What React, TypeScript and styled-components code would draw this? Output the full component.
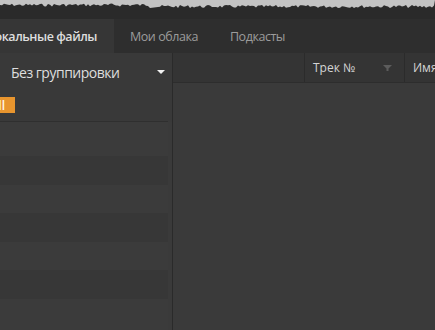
// ========== Media Library
import React from 'react';
import styled, { createGlobalStyle } from 'styled-components';

const Colors = {
  paper: '#c3c3c3',
  top: '#2a2a2a',
  tabBar: '#2e2e2e',
  activeTab: '#363636',
  panel: '#393939',
  stripeLight: '#3b3b3b',
  stripeDark: '#373737',
  header: '#343434',
  line: '#2a2a2a',
  accent: '#e8952e',
  text: '#dedede',
  muted: '#9c9c9c',
};

const GlobalStyle = createGlobalStyle`
  html, body {
    margin: 0;
    padding: 0;
    background: ${Colors.top};
  }
  body {
    font-family: "Open Sans", "Noto Sans", sans-serif;
  }
`;

const tornPoints = (() => {
  const pts: string[] = ['0,0'];
  let seed = 7;
  const rnd = () => {
    seed = (seed * 9301 + 49297) % 233280;
    return seed / 233280;
  };
  for (let x = 0; x <= 435; x += 2) {
    const base = x < 150 ? 3.5 : 5;
    pts.push(`${x},${(base + rnd() * 3).toFixed(1)}`);
  }
  pts.push('435,0');
  return pts.join(' ');
})();

const tabs = ['Мои облака', 'Подкасты'];
const rowHeights = [28, 29, 28, 29, 28, 29, 28];

export default function App() {
  return (
    <>
      <GlobalStyle />
      <Frame>
        <TopBand>
          <svg width="435" height="10" viewBox="0 0 435 10">
            <polygon points={tornPoints} fill={Colors.paper} />
          </svg>
        </TopBand>
        <TabBar>
          <Tab active>
            <TabLabel active>Локальные файлы</TabLabel>
          </Tab>
          {tabs.map((t) => (
            <Tab key={t}>
              <TabLabel>{t}</TabLabel>
            </Tab>
          ))}
        </TabBar>
        <Body>
          <LeftPanel>
            <GroupSelect>
              <span>Без группировки</span>
              <Caret />
            </GroupSelect>
            <FilterBar>
              <AllButton>
                <span>All</span>
              </AllButton>
            </FilterBar>
            <ListArea>
              <List>
                {rowHeights.map((h, i) => (
                  <Row key={i} h={h} dark={i % 2 === 1} />
                ))}
              </List>
              <ScrollTrack />
            </ListArea>
          </LeftPanel>
          <RightPanel>
            <Header>
              <HeaderCell w={132} />
              <HeaderCell w={100}>
                <span>Трек №</span>
                <FilterIcon width="9" height="6" viewBox="0 0 9 6">
                  <path d="M0 0 H9 L5.5 3.5 V6 H3.5 V3.5 Z" fill="#5c5c5c" />
                </FilterIcon>
              </HeaderCell>
              <HeaderCell>
                <span>Имя</span>
              </HeaderCell>
            </Header>
            <Tracks />
          </RightPanel>
        </Body>
      </Frame>
    </>
  );
}

const Frame = styled.div`
  width: 435px;
  height: 330px;
  display: flex;
  flex-direction: column;
  overflow: hidden;
`;

const TopBand = styled.div`
  height: 19px;
  flex-shrink: 0;
  background: ${Colors.top};
  & > svg {
    display: block;
  }
`;

const TabBar = styled.div`
  height: 34px;
  flex-shrink: 0;
  display: flex;
  background: ${Colors.tabBar};
`;

const Tab = styled.div<{ active?: boolean }>`
  display: flex;
  align-items: center;
  justify-content: ${({ active }) => (active ? 'flex-end' : 'flex-start')};
  width: ${({ active }) => (active ? '114px' : 'auto')};
  padding: ${({ active }) => (active ? '0 17px 0 0' : '0 16px')};
  box-sizing: border-box;
  overflow: hidden;
  background: ${({ active }) => (active ? Colors.activeTab : 'transparent')};
`;

const TabLabel = styled.span<{ active?: boolean }>`
  white-space: nowrap;
  font-size: 12.5px;
  letter-spacing: -0.45px;
  font-weight: ${({ active }) => (active ? 600 : 400)};
  color: ${({ active }) => (active ? Colors.text : Colors.muted)};
`;

const Body = styled.div`
  flex: 1;
  display: flex;
  min-height: 0;
`;

const LeftPanel = styled.div`
  width: 172px;
  flex-shrink: 0;
  display: flex;
  flex-direction: column;
  background: ${Colors.panel};
  border-right: 1px solid ${Colors.line};
`;

const GroupSelect = styled.div`
  height: 38px;
  display: flex;
  align-items: center;
  justify-content: space-between;
  padding: 0 7px 0 11px;
  font-size: 14px;
  letter-spacing: -0.5px;
  color: ${Colors.text};
`;

const Caret = styled.span`
  width: 0;
  height: 0;
  border-left: 4px solid transparent;
  border-right: 4px solid transparent;
  border-top: 4px solid #f2f2f2;
  margin-bottom: 1px;
`;

const FilterBar = styled.div`
  height: 31px;
  display: flex;
  align-items: flex-start;
  padding-top: 6px;
  box-sizing: border-box;
  margin-right: 4px;
  border-bottom: 1px solid #2f2f2f;
`;

const AllButton = styled.div`
  width: 15px;
  height: 16px;
  display: flex;
  align-items: center;
  justify-content: flex-end;
  padding-right: 10px;
  box-sizing: border-box;
  overflow: hidden;
  background: ${Colors.accent};
  color: #fff6e8;
  font-size: 12px;
  font-weight: 600;
`;

const ListArea = styled.div`
  flex: 1;
  display: flex;
  min-height: 0;
`;

const List = styled.div`
  flex: 1;
  padding-top: 6px;
  background: ${Colors.stripeLight};
  overflow: hidden;
`;

const Row = styled.div<{ h: number; dark?: boolean }>`
  height: ${({ h }) => h}px;
  background: ${({ dark }) => (dark ? Colors.stripeDark : Colors.stripeLight)};
`;

const ScrollTrack = styled.div`
  width: 4px;
  background: #3a3a3a;
`;

const RightPanel = styled.div`
  flex: 1;
  display: flex;
  flex-direction: column;
  background: #3a3a3a;
`;

const Header = styled.div`
  height: 29px;
  flex-shrink: 0;
  display: flex;
  background: ${Colors.header};
  border-bottom: 1px solid #2d2d2d;
`;

const HeaderCell = styled.div<{ w?: number }>`
  ${({ w }) => (w ? `width: ${w}px; flex-shrink: 0;` : 'flex: 1;')}
  display: flex;
  align-items: center;
  justify-content: space-between;
  padding: 0 8px;
  box-sizing: border-box;
  border-right: 1px solid #2b2b2b;
  font-size: 12px;
  color: #d4d4d4;
  white-space: nowrap;
`;

const FilterIcon = styled.svg`
  flex-shrink: 0;
  margin-right: 4px;
`;

const Tracks = styled.div`
  flex: 1;
  background: #3a3a3a;
`;
